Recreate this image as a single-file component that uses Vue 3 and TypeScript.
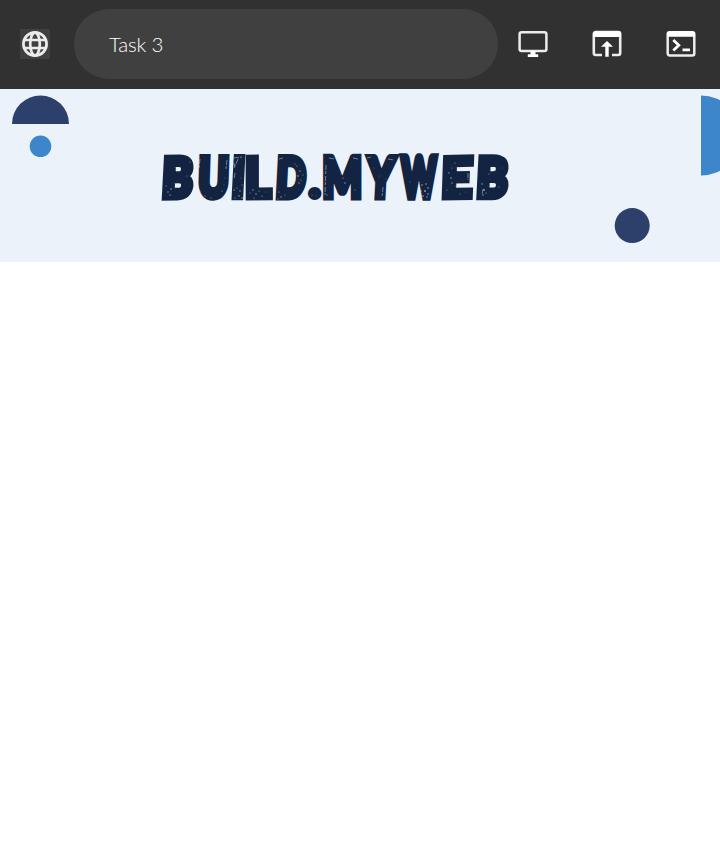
<script setup lang="ts">
interface Glyph {
  char: string
  left: number
  right: number
  skew: number
  tilt: number
}

const glyphs: Glyph[] = [
  { char: 'B', left: 161.5, right: 194, skew: -4, tilt: -1 },
  { char: 'U', left: 197, right: 228.5, skew: -2, tilt: 0 },
  { char: 'I', left: 231, right: 244, skew: -3, tilt: 0 },
  { char: 'L', left: 245.5, right: 273.5, skew: -1, tilt: -1 },
  { char: 'D', left: 275, right: 306.5, skew: -3, tilt: 0 },
  { char: '.', left: 308, right: 321.5, skew: 0, tilt: 0 },
  { char: 'M', left: 322.5, right: 362, skew: 0, tilt: 0 },
  { char: 'Y', left: 363, right: 397, skew: -3, tilt: 0 },
  { char: 'W', left: 398.5, right: 439.5, skew: 0, tilt: 0 },
  { char: 'E', left: 441.5, right: 473.5, skew: -3, tilt: -1 },
  { char: 'B', left: 476, right: 509, skew: -3, tilt: 0 },
]

const outline = 6
const baseline = 197.4
const pen = document.createElement('canvas').getContext('2d')!
pen.font = '900 54.5px Lato, sans-serif'

// Fits the ink of a glyph between its left and right edges
function fit(g: Glyph): string {
  const m = pen.measureText(g.char)
  const ink = m.actualBoundingBoxRight + m.actualBoundingBoxLeft
  const scale = (g.right - g.left - outline) / ink
  return `translate(${g.left + outline / 2} ${baseline}) rotate(${g.tilt}) skewX(${g.skew}) scale(${scale} ${g.char === '.' ? 0.8 : 1}) translate(${m.actualBoundingBoxLeft} 0)`
}

// Worn spots of the stamped lettering: x, y, radius
const specks: [number, number, number][] = [
  [166, 186, 0.6], [168, 192, 0.7], [171, 189, 0.8], [170, 195, 0.7], [187, 176, 0.5], [190, 162, 0.5],
  [200, 191, 0.5], [205, 196, 0.6], [211, 198, 0.5], [222, 191, 0.6], [224, 185, 0.4], [225, 178, 0.4],
  [234, 190, 0.7], [237, 188, 0.6], [240, 191, 0.7], [242, 185, 0.6], [239, 196, 0.8], [235, 198, 0.6], [242, 198, 0.7], [241, 178, 0.4],
  [250, 193, 0.5], [253, 190, 0.7], [256, 194, 0.7], [259, 191, 0.6], [262, 196, 0.6], [254, 198, 0.6], [266, 192, 0.4],
  [279, 192, 0.6], [281, 197, 0.7], [278, 199, 0.5], [285, 195, 0.5], [297, 166, 0.6], [300, 171, 0.7], [298, 176, 0.8], [301, 180, 0.6], [299, 183, 0.7], [295, 164, 0.5], [303, 175, 0.5],
  [312, 195, 0.5], [316, 196, 0.4], [327, 195, 0.6], [343, 178, 0.6], [345, 183, 0.7], [341, 174, 0.5], [355, 190, 0.5], [334, 188, 0.5],
  [374, 168, 0.4], [379, 176, 0.4], [386, 179, 0.4], [410, 182, 0.4],
  [422, 185, 0.8], [426, 184, 0.8], [428, 188, 0.8], [421, 191, 0.8], [425, 191, 0.9], [428, 194, 0.8], [423, 196, 0.8], [427, 197, 0.7], [419, 182, 0.6],
  [449, 173, 0.7], [451, 178, 0.8], [452, 183, 0.7], [456, 186, 0.5], [447, 190, 0.5], [460, 194, 0.5], [455, 163, 0.5], [466, 192, 0.4], [452, 168, 0.5],
  [482, 184, 0.7], [484, 190, 0.9], [483, 195, 0.7], [486, 193, 0.6], [499, 187, 0.5], [502, 168, 0.4], [489, 174, 0.6],
]
</script>

<template>
  <main class="page">
    <header class="toolbar">
      <div class="site">
        <svg class="globe" viewBox="0 0 30 30" fill="none" stroke="#ececec" stroke-width="2.700">
          <circle cx="15" cy="15" r="11.600" />
          <ellipse cx="15" cy="15" rx="4.800" ry="11.400" />
          <path d="M4 11H26M4 19H26" />
        </svg>
      </div>
      <div class="address">Task 3</div>
      <nav class="actions">
        <svg viewBox="0 0 30 28">
          <rect x="1.600" y="2.200" width="26.800" height="18.900" rx="2" fill="none" stroke="#ececec" stroke-width="2.500" />
          <path d="M12.500 21h5v3.300h2.700V27H9.800v-2.700h2.700z" fill="#fff" />
        </svg>
        <svg viewBox="0 0 30 28">
          <path d="M10 25H3.800a2 2 0 0 1-2-2V4a2 2 0 0 1 2-2h22.400a2 2 0 0 1 2 2v19a2 2 0 0 1-2 2H20" fill="none" stroke="#ececec" stroke-width="2.600" />
          <path d="M1 6V4Q1 1.200 3.800 1.200h22.400Q29 1.200 29 4V7H1zM15 11l6 5.800h-4.300V26.800h-3.400V16.800H9z" fill="#fff" />
        </svg>
        <svg viewBox="0 0 30 28">
          <rect x="1.700" y="2.300" width="26.600" height="23.200" rx="2" fill="none" stroke="#ececec" stroke-width="2.500" />
          <path d="M1 6V4Q1 1.200 3.800 1.200h22.400Q29 1.200 29 4V6.800H1zM16.500 18.500h7.500v2.700h-7.500z" fill="#fff" />
          <path d="M7.300 10l5.500 5.200-5.500 5.200" fill="none" stroke="#fff" stroke-width="2.800" />
        </svg>
      </nav>
    </header>

    <section class="banner">
      <svg class="art" viewBox="0 89 720 173">
        <path d="M12 124a28.500 28.500 0 0 1 57 0z" fill="#2c406b" />
        <circle cx="40.500" cy="146.300" r="10.800" fill="#3d86cb" />
        <path d="M701 95.500a40 40 0 0 1 0 80z" fill="#3d86cb" />
        <circle cx="632.200" cy="225.600" r="17.500" fill="#2c406b" />
        <text v-for="(g, i) in glyphs" :key="i" class="wordmark" :transform="fit(g)">{{ g.char }}</text>
        <g fill="#dbe4ee" opacity=".65">
          <circle v-for="(s, i) in specks" :key="i" :cx="s[0]" :cy="s[1]" :r="s[2]" />
        </g>
        <g class="scratches">
          <path d="M200 159l-1 9M227 160l-1 9M234 158l8-1M234 163l1 6M235 173l-1 6M238 159l-3 7" />
          <path d="M279 159l4-1M326 165l-1 30M329 158l6 1M353 158l5 1M367 158l4-1M388 159l6 1M383 187l-1 10M468 173v7M483 189l-1 6" />
        </g>
      </svg>
    </section>
  </main>
</template>

<style>
body {
  background: #fff;
}
</style>

<style scoped>
.page {
  width: 100%;
  min-height: 843px;
  background: #fff;
}
.toolbar {
  box-sizing: border-box;
  height: 89px;
  padding: 0 24px 1px 20px;
  display: flex;
  align-items: center;
  background: #313131;
}
.site {
  width: 30px;
  height: 30px;
  margin-right: 24px;
  background: #404040;
}
.globe {
  display: block;
  width: 30px;
  height: 30px;
}
.address {
  box-sizing: border-box;
  width: 424px;
  height: 70px;
  padding: 0 35px;
  display: flex;
  align-items: center;
  border-radius: 35px;
  background: #404040;
  color: #fff;
  font: 300 20.5px Lato, sans-serif;
  letter-spacing: -0.2px;
}
.actions {
  display: flex;
  gap: 44px;
  margin-left: 20px;
}
.actions svg {
  display: block;
  width: 30px;
  height: 28px;
}
.banner {
  height: 173px;
  overflow: hidden;
  background: #ebf2f9;
}
.art {
  display: block;
  width: 720px;
  height: 173px;
}
.wordmark {
  font: 900 54.5px Lato, sans-serif;
  fill: #132442;
  stroke: #132442;
  stroke-width: 6px;
  stroke-linejoin: miter;
  vector-effect: non-scaling-stroke;
}
.scratches {
  fill: none;
  stroke: #dbe4ee;
  stroke-width: 0.8;
  stroke-dasharray: 5 1 3 2;
  opacity: 0.6;
}
</style>
